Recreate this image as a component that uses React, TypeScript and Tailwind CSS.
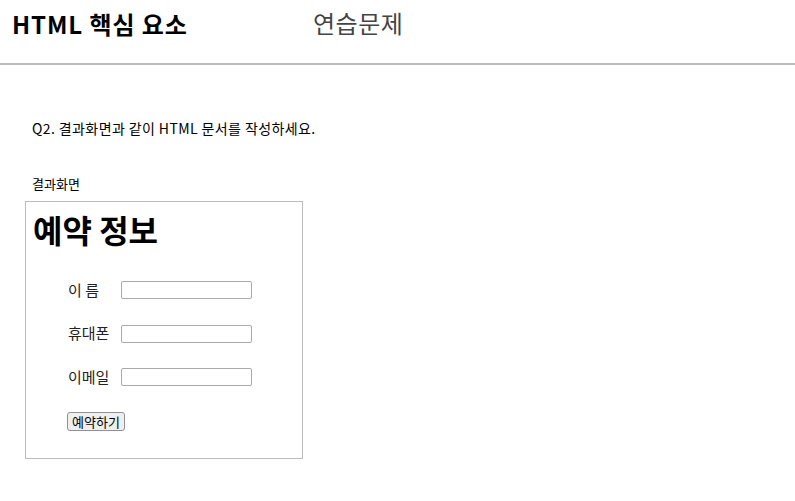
export default function App() {
  const font = { fontFamily: '"Noto Sans CJK KR", "Noto Sans", sans-serif' }
  return (
    <div className="w-[795px] h-[501px] bg-white text-black" style={font}>
      <header className="h-[65px] border-b-2 border-[#bdbdbd] flex items-start">
        <h1 className="ml-[12px] mt-[7px] text-[24px] tracking-[0.9px] font-bold leading-[34px] w-[301px]">HTML 핵심 요소</h1>
        <span className="mt-[6px] text-[24px] tracking-[0.5px] leading-[34px] text-[#444]">연습문제</span>
      </header>

      <p className="ml-[32px] mt-[53px] text-[14px] tracking-[0.4px] leading-[20px]">Q2. 결과화면과 같이 HTML 문서를 작성하세요.</p>
      <p className="ml-[32px] mt-[37px] text-[13px] leading-[18px]">결과화면</p>

      <div className="ml-[25px] mt-[8px] w-[278px] h-[258px] border border-[#bbb]">
        <h2 className="ml-[7px] mt-[7px] text-[32px] font-bold leading-[40px]">예약 정보</h2>
        <div className="ml-[42px] mt-[32px] flex flex-col gap-[25.5px]">
          {["이 름", "휴대폰", "이메일"].map((label) => (
            <div key={label} className="flex items-center h-[18px]">
              <span className="w-[53px] text-[15px] text-[#222]">{label}</span>
              <input className="w-[131px] h-[18px] border border-[#a9a9b0] rounded-[2px] bg-white" />
            </div>
          ))}
        </div>
        <button className="ml-[41px] mt-[26px] h-[19px] w-[58px] text-[13px] leading-[15px] bg-[#efefef] border border-[#8f8f9d] rounded-[3px]">
          예약하기
        </button>
      </div>
    </div>
  )
}
